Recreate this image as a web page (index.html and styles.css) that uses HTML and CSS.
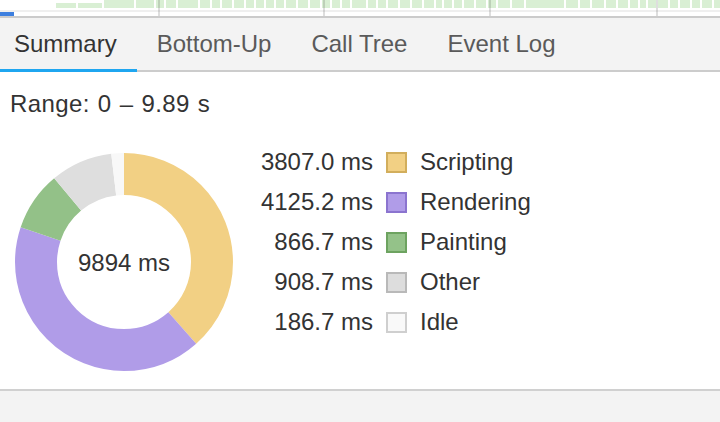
FILE: index.html
```html
<!DOCTYPE html>
<html lang="en">
<head>
<meta charset="utf-8">
<title>Summary</title>
<link rel="stylesheet" href="styles.css">
</head>
<body>
<div class="overview">
  <div class="lanes">
    <span class="blk short" style="width:20px"></span>
    <span class="blk short" style="width:24px"></span>
    <span class="blk" style="width:30px"></span>
    <span class="blk" style="width:18px"></span>
    <span class="blk" style="width:8px"></span>
    <span class="blk" style="width:10px"></span>
    <span class="blk" style="width:20px"></span>
    <span class="blk" style="width:10px"></span>
    <span class="blk" style="width:8px"></span>
    <span class="blk" style="width:10px"></span>
    <span class="blk" style="width:10px"></span>
    <span class="blk" style="width:8px"></span>
    <span class="blk" style="width:8px"></span>
    <span class="blk" style="width:8px"></span>
    <span class="blk" style="width:8px"></span>
    <span class="blk" style="width:10px"></span>
    <span class="blk" style="width:10px"></span>
    <span class="blk" style="width:10px"></span>
    <span class="blk" style="width:8px"></span>
    <span class="blk" style="width:8px"></span>
    <span class="blk" style="width:8px"></span>
    <span class="blk" style="width:14px"></span>
    <span class="blk" style="width:8px"></span>
    <span class="blk" style="width:8px"></span>
    <span class="blk" style="width:10px"></span>
    <span class="blk" style="width:10px"></span>
    <span class="blk" style="width:10px"></span>
    <span class="blk" style="width:10px"></span>
    <span class="blk" style="width:6px"></span>
    <span class="blk" style="width:8px"></span>
    <span class="blk" style="width:8px"></span>
    <span class="blk" style="width:10px"></span>
    <span class="blk" style="width:10px"></span>
    <span class="blk" style="width:8px"></span>
    <span class="blk" style="width:12px"></span>
    <span class="blk" style="width:12px"></span>
    <span class="blk" style="width:38px"></span>
    <span class="blk" style="width:12px"></span>
    <span class="blk" style="width:10px"></span>
    <span class="blk" style="width:12px"></span>
    <span class="blk" style="width:10px"></span>
    <span class="blk" style="width:10px"></span>
    <span class="blk" style="width:8px"></span>
    <span class="blk" style="width:6px"></span>
    <span class="blk" style="width:8px"></span>
    <span class="blk" style="width:10px"></span>
    <span class="blk" style="width:8px"></span>
    <span class="blk" style="width:10px"></span>
    <span class="blk" style="width:8px"></span>
    <span class="blk" style="width:10px"></span>
    <span class="blk" style="width:10px"></span>
  </div>
  <div class="sep"></div>
  <div class="scrollbar"><span class="thumb"></span></div>
  <span class="gridline" style="left:158px"></span>
  <span class="gridline" style="left:323px"></span>
  <span class="gridline" style="left:489px"></span>
  <span class="gridline" style="left:656px"></span>
</div>

<div class="tabbar">
  <div class="tab active">Summary</div>
  <div class="tab">Bottom-Up</div>
  <div class="tab">Call Tree</div>
  <div class="tab">Event Log</div>
</div>

<div class="content">
  <div class="range">Range: 0 – 9.89 s</div>
  <div class="summary">
    <svg class="donut" width="220" height="220" viewBox="0 0 220 220">
      <g transform="rotate(-90 110 110)" fill="none" stroke-width="42">
        <circle cx="110" cy="110" r="88" pathLength="9894.3" stroke="#f2d084" stroke-dasharray="3807.0 9894.3" stroke-dashoffset="0"/>
        <circle cx="110" cy="110" r="88" pathLength="9894.3" stroke="#b09ce8" stroke-dasharray="4125.2 9894.3" stroke-dashoffset="-3807.0"/>
        <circle cx="110" cy="110" r="88" pathLength="9894.3" stroke="#93c188" stroke-dasharray="866.7 9894.3" stroke-dashoffset="-7932.2"/>
        <circle cx="110" cy="110" r="88" pathLength="9894.3" stroke="#dedede" stroke-dasharray="908.7 9894.3" stroke-dashoffset="-8798.9"/>
        <circle cx="110" cy="110" r="88" pathLength="9894.3" stroke="#f8f8f8" stroke-dasharray="186.7 9894.3" stroke-dashoffset="-9707.6"/>
      </g>
      <text class="total" x="110" y="119" text-anchor="middle">9894 ms</text>
    </svg>
    <div class="legend">
      <div class="row"><span class="val">3807.0 ms</span><span class="sw scripting"></span><span class="lbl">Scripting</span></div>
      <div class="row"><span class="val">4125.2 ms</span><span class="sw rendering"></span><span class="lbl">Rendering</span></div>
      <div class="row"><span class="val">866.7 ms</span><span class="sw painting"></span><span class="lbl">Painting</span></div>
      <div class="row"><span class="val">908.7 ms</span><span class="sw other"></span><span class="lbl">Other</span></div>
      <div class="row"><span class="val">186.7 ms</span><span class="sw idle"></span><span class="lbl">Idle</span></div>
    </div>
  </div>
</div>

<div class="footer"></div>
</body>
</html>
```
FILE: styles.css
```css
* { box-sizing: border-box; }

html, body {
  margin: 0;
  padding: 0;
  width: 720px;
  height: 422px;
  overflow: hidden;
  background: #ffffff;
  font-family: "Liberation Sans", Arial, Helvetica, sans-serif;
  color: #333333;
}

body {
  display: flex;
  flex-direction: column;
}

/* ---------- overview strip ---------- */
.overview {
  position: relative;
  height: 18px;
  flex: none;
  background: #ffffff;
}

.lanes {
  display: flex;
  gap: 2px;
  height: 8px;
  padding-left: 56px;
  overflow: hidden;
}

.blk {
  flex: none;
  height: 8px;
  background: #d9efd4;
}

.blk.short {
  margin-top: 3px;
  height: 5px;
}

.sep {
  height: 2px;
  margin-top: 2px;
  background: #efefef;
}

.scrollbar {
  height: 4px;
  background: #ffffff;
}

.thumb {
  display: block;
  width: 14px;
  height: 4px;
  background: #3d7fdf;
}

.overview::after {
  content: "";
  position: absolute;
  left: 0;
  right: 0;
  bottom: 0;
  height: 2px;
  background: #cbcbcb;
}

.gridline {
  position: absolute;
  top: 0;
  width: 2px;
  height: 16px;
  background: rgba(0, 0, 0, 0.13);
}

/* ---------- tabs ---------- */
.tabbar {
  flex: none;
  display: flex;
  height: 54px;
  background: #f3f3f3;
  border-bottom: 2px solid #cccccc;
}

.tab {
  position: relative;
  padding: 0 20px;
  line-height: 52px;
  font-size: 24px;
  color: #5a5a5a;
  white-space: nowrap;
}

.tab:first-child {
  padding-left: 14px;
}

.tab.active {
  color: #333333;
}

.tab.active::after {
  content: "";
  position: absolute;
  left: 0;
  right: 0;
  bottom: -2px;
  height: 3px;
  background: #1fa6f0;
}

/* ---------- content ---------- */
.content {
  flex: none;
  height: 317px;
  padding: 18px 0 0 10px;
  background: #ffffff;
}

.range {
  font-size: 24px;
  line-height: 28px;
  letter-spacing: 0.4px;
  word-spacing: 1px;
  white-space: nowrap;
}

.summary {
  display: flex;
  align-items: flex-start;
}

.donut {
  flex: none;
  margin-top: 34px;
  margin-left: 4px;
  display: block;
}

.total {
  font-family: "Liberation Sans", Arial, Helvetica, sans-serif;
  font-size: 24px;
  fill: #333333;
}

.legend {
  margin-top: 24px;
  margin-left: 20px;
  display: flex;
  flex-direction: column;
}

.row {
  display: flex;
  align-items: center;
  height: 40px;
  font-size: 24px;
  white-space: nowrap;
}

.val {
  width: 119px;
  text-align: right;
}

.sw {
  flex: none;
  width: 21px;
  height: 21px;
  margin-left: 13px;
  margin-right: 13px;
  border: 2px solid;
}

.scripting { background: #f2d084; border-color: #d2ae5c; }
.rendering { background: #b09ce8; border-color: #8b74cf; }
.painting  { background: #94c289; border-color: #6da360; }
.other     { background: #dddddd; border-color: #b9b9b9; }
.idle      { background: #f9f9f9; border-color: #cfcfcf; }

/* ---------- footer ---------- */
.footer {
  flex: 1;
  background: #f3f3f3;
  border-top: 2px solid #d0d0d0;
}
```
